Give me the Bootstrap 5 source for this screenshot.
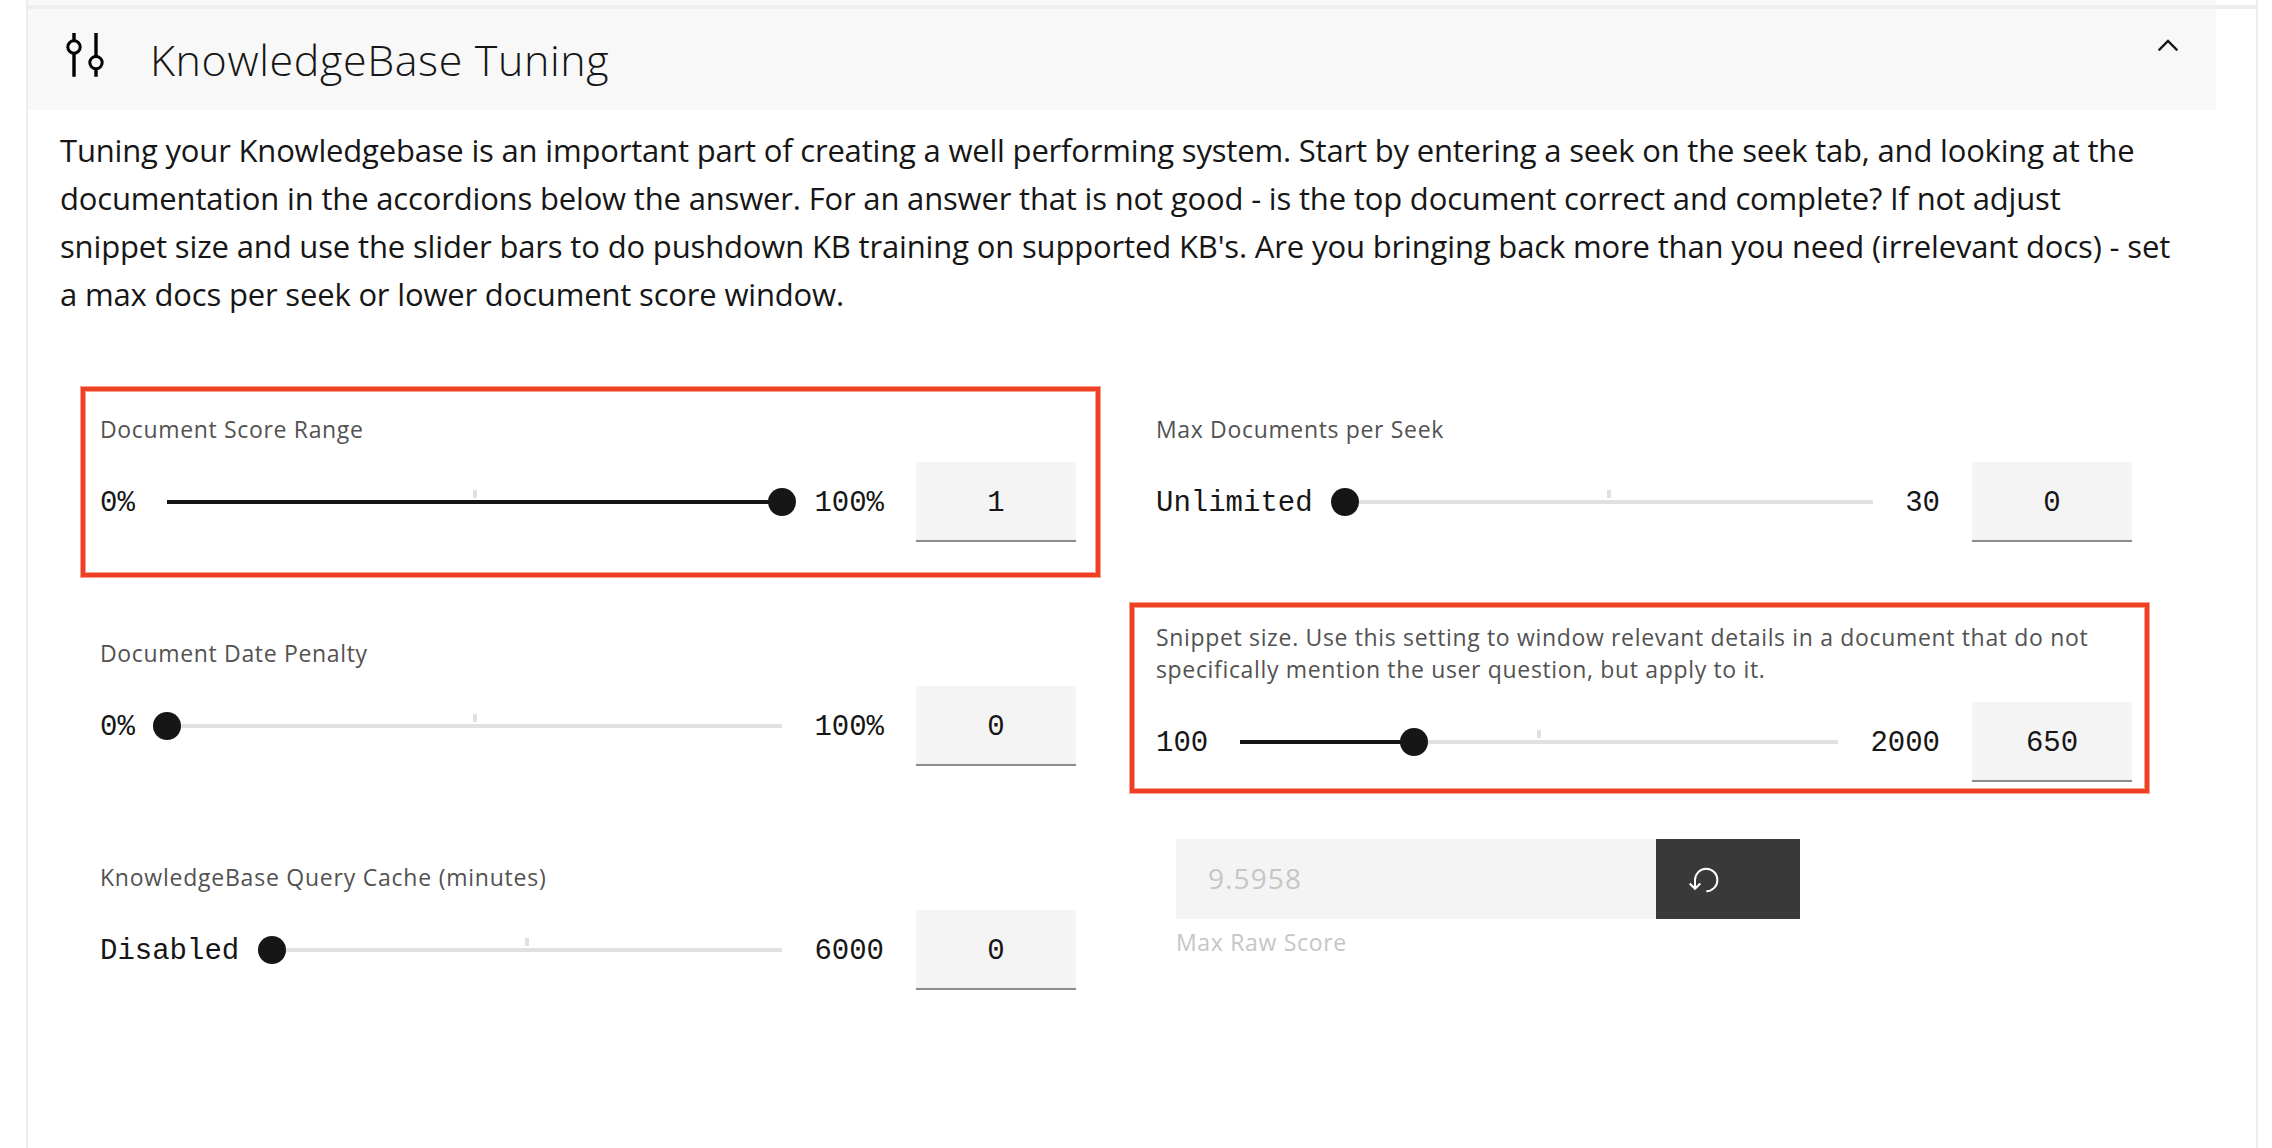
<!DOCTYPE html>
<html lang="en">
<head>
<meta charset="utf-8">
<meta name="viewport" content="width=device-width, initial-scale=1">
<title>KnowledgeBase Tuning</title>
<link href="https://cdn.jsdelivr.net/npm/bootstrap@5.3.0/dist/css/bootstrap.min.css" rel="stylesheet">
<style>
  body { font-family: "Open Sans", "Noto Sans", sans-serif; color: #161616; background: #fff; }
  .panel { height: 1148px; margin: 0 14px 0 26px; border: solid #eee; border-width: 0 2px; }
  .prev-header { height: 5px; margin-right: 40px; background: #f8f8f8; }
  .divider { height: 4px; background: #eee; }
  .panel-header { height: 101px; margin-right: 40px; padding: 21px 36px 0 40px; background: #f8f8f8; }
  .panel-title { font-size: 43px; font-weight: 300; line-height: 60px; letter-spacing: .62px; margin-left: 42px; }
  .panel-body { padding: 16px 32px 0; }
  .intro { font-size: 31px; line-height: 48px; letter-spacing: -.17px; }
  .intro span { display: block; white-space: nowrap; }
  .fields { margin-top: 95px; padding-left: 40px; gap: 80px; }
  .field-col { width: 976px; }
  .left-col { gap: 95px; }
  .field-label { font-size: 23px; line-height: 32px; letter-spacing: .66px; color: #525252; margin-bottom: 17px; }
  .slider-row { height: 80px; gap: 32px; font: 29px/82px "Liberation Mono", monospace; }
  .slider-row > span { padding-top: 3px; }
  .slider-track { height: 4px; background: #e0e0e0; }
  .slider-fill { height: 4px; background: #161616; }
  .slider-thumb { width: 28px; height: 28px; border-radius: 50%; background: #161616; top: 50%; transform: translate(-50%, -50%); }
  .slider-tick { width: 4px; height: 8px; background: #e0e0e0; top: -10px; left: 50%; transform: translateX(-50%); }
  .slider-value { width: 160px; height: 80px; line-height: 84px; background: #f4f4f4; border-bottom: 2px solid #8d8d8d; }
  .callout-frame { border: 4px solid #ee4023; box-shadow: 0 0 0 1px #ee402380, inset 0 0 0 1px #ee402380; pointer-events: none; }
  .frame-score { inset: -26px -24px -35px -19px; }
  .frame-snippet { inset: -18px -17px -11px -26px; }
  .snippet-field { margin-top: 79px; }
  .raw-score { margin: 57px 0 0 20px; }
  .raw-input { width: 480px; height: 80px; padding-left: 32px; background: #f4f4f4; color: #c6c6c6; font-size: 28px; line-height: 78px; letter-spacing: 1.1px; }
  .raw-reset { width: 144px; height: 80px; padding: 0 0 0 32px; background: #393939; }
  .raw-label { margin-top: 7px; font-size: 23px; line-height: 32px; letter-spacing: .68px; color: #c6c6c6; }
</style>
<script src="https://cdn.jsdelivr.net/npm/bootstrap@5.3.0/dist/js/bootstrap.bundle.min.js"></script>
</head>
<body class="overflow-hidden">
<main class="panel">
  <div class="prev-header"></div>
  <div class="divider"></div>
  <header class="panel-header d-flex align-items-start">
    <svg width="40" height="52" viewBox="0 0 40 52" fill="none" stroke="#000" class="flex-shrink-0 overflow-visible">
      <g stroke-width="3.4"><path d="M6 3v8M6 23v23.700M28 3v23M28 38.500v8.200"/></g>
      <g stroke-width="3"><circle cx="6" cy="17" r="6.200"/><circle cx="28" cy="32.600" r="6.200"/></g>
    </svg>
    <h1 class="panel-title mb-0">KnowledgeBase Tuning</h1>
    <svg class="ms-auto" width="24" height="32" viewBox="0 0 24 32" fill="none" stroke="#161616" stroke-width="2.300"><path d="M2.700 20.400 12 11l9.300 9.400"/></svg>
  </header>
  <section class="panel-body">
    <p class="intro mb-0">
      <span style="letter-spacing:-.185px">Tuning your Knowledgebase is an important part of creating a well performing system. Start by entering a seek on the seek tab, and looking at the</span>
      <span>documentation in the accordions below the answer. For an answer that is not good - is the top document correct and complete? If not adjust</span>
      <span style="letter-spacing:-.15px">snippet size and use the slider bars to do pushdown KB training on supported KB's. Are you bringing back more than you need (irrelevant docs) - set</span>
      <span>a max docs per seek or lower document score window.</span>
    </p>
    <div class="fields d-flex align-items-start">
      <div class="field-col left-col d-flex flex-column flex-shrink-0">
        <div class="position-relative">
          <div class="field-label">Document Score Range</div>
          <div class="slider-row d-flex align-items-center">
            <span>0%</span>
            <div class="slider-track position-relative flex-grow-1"><div class="slider-fill" style="width:100%"></div><i class="slider-tick position-absolute"></i><i class="slider-thumb position-absolute" style="left:100%"></i></div>
            <span>100%</span>
            <div class="slider-value text-center">1</div>
          </div>
          <div class="callout-frame frame-score position-absolute"></div>
        </div>
        <div>
          <div class="field-label">Document Date Penalty</div>
          <div class="slider-row d-flex align-items-center">
            <span>0%</span>
            <div class="slider-track position-relative flex-grow-1"><i class="slider-tick position-absolute"></i><i class="slider-thumb position-absolute" style="left:0%"></i></div>
            <span>100%</span>
            <div class="slider-value text-center">0</div>
          </div>
        </div>
        <div>
          <div class="field-label" style="letter-spacing:.77px">KnowledgeBase Query Cache (minutes)</div>
          <div class="slider-row d-flex align-items-center">
            <span>Disabled</span>
            <div class="slider-track position-relative flex-grow-1"><i class="slider-tick position-absolute"></i><i class="slider-thumb position-absolute" style="left:.15%"></i></div>
            <span>6000</span>
            <div class="slider-value text-center">0</div>
          </div>
        </div>
      </div>
      <div class="field-col flex-shrink-0">
        <div>
          <div class="field-label">Max Documents per Seek</div>
          <div class="slider-row d-flex align-items-center">
            <span>Unlimited</span>
            <div class="slider-track position-relative flex-grow-1"><i class="slider-tick position-absolute"></i><i class="slider-thumb position-absolute" style="left:0%"></i></div>
            <span>30</span>
            <div class="slider-value text-center">0</div>
          </div>
        </div>
        <div class="snippet-field position-relative">
          <div class="field-label">Snippet size. Use this setting to window relevant details in a document that do not<br>specifically mention the user question, but apply to it.</div>
          <div class="slider-row d-flex align-items-center">
            <span>100</span>
            <div class="slider-track position-relative flex-grow-1"><div class="slider-fill" style="width:29.08%"></div><i class="slider-tick position-absolute"></i><i class="slider-thumb position-absolute" style="left:29.08%"></i></div>
            <span>2000</span>
            <div class="slider-value text-center">650</div>
          </div>
          <div class="callout-frame frame-snippet position-absolute"></div>
        </div>
        <div class="raw-score">
          <div class="d-flex">
            <div class="raw-input">9.5958</div>
            <button class="raw-reset btn border-0 rounded-0 d-flex align-items-center" type="button" aria-label="Reset">
              <svg width="32" height="32" viewBox="0 0 32 32" fill="none" stroke="#fff" stroke-width="2"><path d="M18.300 28.200a11.200 11.200 0 1 0-11.300-11.200v9M1.700 20.500 7 25.800l5.300-5.300"/></svg>
            </button>
          </div>
          <div class="raw-label">Max Raw Score</div>
        </div>
      </div>
    </div>
  </section>
</main>
</body>
</html>
